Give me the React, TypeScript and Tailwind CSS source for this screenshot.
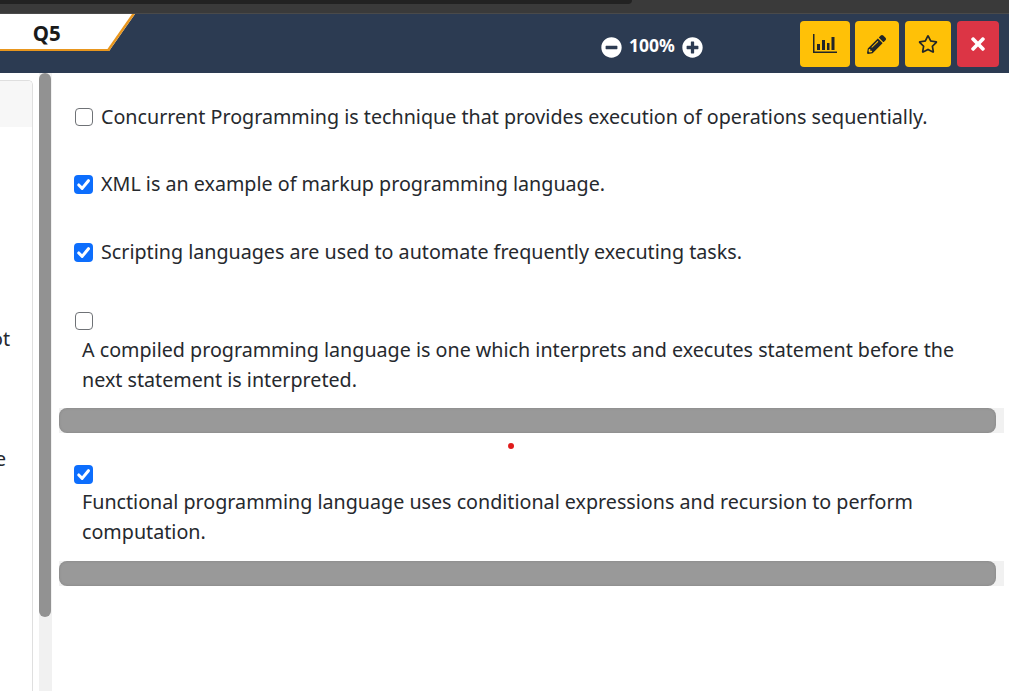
import React from "react";
import { FaMinusCircle, FaPlusCircle, FaPencilAlt, FaRegStar, FaTimes } from "react-icons/fa";

const ChartIcon = () => (
    <svg width="24" height="20" viewBox="0 0 24 20" fill="#212529">
        <rect x="0" y="0" width="1.5" height="19" />
        <rect x="0" y="17.5" width="24" height="1.5" />
        <rect x="4" y="10" width="3" height="6" />
        <rect x="9" y="6" width="3" height="10" />
        <rect x="14" y="9" width="2.5" height="7" />
        <rect x="18.5" y="3" width="3" height="13" />
    </svg>
);

const Checkbox = ({ checked }: { checked?: boolean }) =>
    checked ? (
        <span className="flex h-[19px] w-[19px] shrink-0 items-center justify-center rounded-[4px] bg-[#0d6efd]">
            <svg width="19" height="19" viewBox="0 0 20 20" fill="none">
                <path
                    d="M5 10.5l3.6 3.6L15.2 6"
                    stroke="#fff"
                    strokeWidth="3.2"
                    strokeLinecap="round"
                    strokeLinejoin="round"
                />
            </svg>
        </span>
    ) : (
        <span className="ml-[1px] block h-[18px] w-[18px] shrink-0 rounded-[4px] border-[1.5px] border-[#6f7276] bg-white" />
    );

const InlineOption = ({ checked, text }: { checked?: boolean; text: string }) => (
    <div className="flex h-[30px] items-center pl-[22px]">
        <span className="w-[27px] shrink-0">
            <Checkbox checked={checked} />
        </span>
        <span>{text}</span>
    </div>
);

interface BlockOptionProps {
    checked?: boolean;
    lines: string[];
    textClass: string;
    barClass: string;
}

const BlockOption = ({ checked, lines, textClass, barClass }: BlockOptionProps) => (
    <div className="flex flex-col">
        <div className="pl-[22px]">
            <Checkbox checked={checked} />
        </div>
        <div className={textClass}>
            {lines.map((line) => (
                <div key={line} className="h-[30px]">
                    {line}
                </div>
            ))}
        </div>
        <div className={barClass}>
            <div className="w-[937px] rounded-[8px] bg-[#999999] shadow-[inset_0_0_3px_rgba(0,0,0,0.15)]" />
        </div>
    </div>
);

const App = () => {
    return (
        <div className="flex h-[691px] w-[1009px] flex-col overflow-hidden bg-white font-['Noto_Sans',sans-serif] text-[19.7px] leading-[30px] text-[#26292e]">
            <div className="h-[14px] border-b border-[#4a4a4a] bg-[#3a3a3a]">
                <div className="h-[4px] w-[632px] rounded-br-[12px] bg-[#222222]" />
            </div>

            <header className="flex h-[59px] items-start bg-[#2c3b52]">
                <div className="ml-[-29px] flex h-[37px] w-[164px] origin-top -skew-x-[35deg] items-center justify-center border-r-[3px] border-b-[2px] border-[#e8961e] bg-white">
                    <span className="ml-[16px] mt-[2px] skew-x-[35deg] text-[20.5px] font-bold text-[#1a1a1a]">Q5</span>
                </div>
                <div className="ml-[466px] mt-[20px] flex items-center text-white">
                    <FaMinusCircle className="text-[21px]" />
                    <span className="mx-[7px] mt-[-4px] text-[17.5px] font-bold">100%</span>
                    <FaPlusCircle className="text-[21px]" />
                </div>
                <div className="ml-[97px] mt-[7px] flex gap-[5px]">
                    <div className="flex h-[46px] w-[50px] items-center justify-center rounded-[4px] bg-[#ffc107]">
                        <ChartIcon />
                    </div>
                    <div className="flex h-[46px] w-[44px] items-center justify-center rounded-[4px] bg-[#ffc107] text-[19px] text-[#212529]">
                        <FaPencilAlt />
                    </div>
                    <div className="ml-[1px] flex h-[46px] w-[46px] items-center justify-center rounded-[4px] bg-[#ffc107] text-[20px] text-[#212529]">
                        <FaRegStar />
                    </div>
                    <div className="ml-[1px] flex h-[46px] w-[42px] items-center justify-center rounded-[4px] bg-[#dc3545] text-[20px] text-white">
                        <FaTimes />
                    </div>
                </div>
            </header>

            <div className="flex flex-1">
                <aside className="flex w-[39px] shrink-0 flex-col pt-[7px]">
                    <div className="h-full w-[33px] overflow-hidden rounded-tr-[5px] border-t border-r border-[#dfdfdf]">
                        <div className="h-[46px] bg-[#f7f7f7]" />
                        <div className="mt-[197px] flex justify-end pr-[22px]">
                            <span className="shrink-0">ot</span>
                        </div>
                        <div className="mt-[90px] flex justify-end pr-[26px]">
                            <span className="shrink-0">e</span>
                        </div>
                    </div>
                </aside>

                <div className="w-[13px] shrink-0 bg-[#f1f1f1]">
                    <div className="h-[544px] w-[12px] rounded-[7px] bg-[#929292]" />
                </div>

                <main className="relative flex-1 pt-[29px]">
                    <InlineOption text="Concurrent Programming is technique that provides execution of operations sequentially." />
                    <div className="mt-[37px]">
                        <InlineOption checked text="XML is an example of markup programming language." />
                    </div>
                    <div className="mt-[38px]">
                        <InlineOption checked text="Scripting languages are used to automate frequently executing tasks." />
                    </div>
                    <div className="mt-[45px]">
                        <BlockOption
                            lines={["A compiled programming language is one which interprets and executes statement before the", "next statement is interpreted."]}
                            textClass="mt-[5px] pl-[30px]"
                            barClass="mt-[13px] ml-[7px] flex h-[25px] w-[945px] bg-[#f1f1f1]"
                        />
                    </div>
                    <div className="mt-[32px]">
                        <BlockOption
                            checked
                            lines={["Functional programming language uses conditional expressions and recursion to perform", "computation."]}
                            textClass="mt-[3px] pl-[30px]"
                            barClass="mt-[14px] ml-[7px] flex h-[25px] w-[945px] bg-[#f1f1f1]"
                        />
                    </div>
                    <span className="absolute left-[456px] top-[370px] h-[6px] w-[6px] rounded-full bg-[#e01b1b]" />
                </main>
            </div>
        </div>
    );
};

export default App;
